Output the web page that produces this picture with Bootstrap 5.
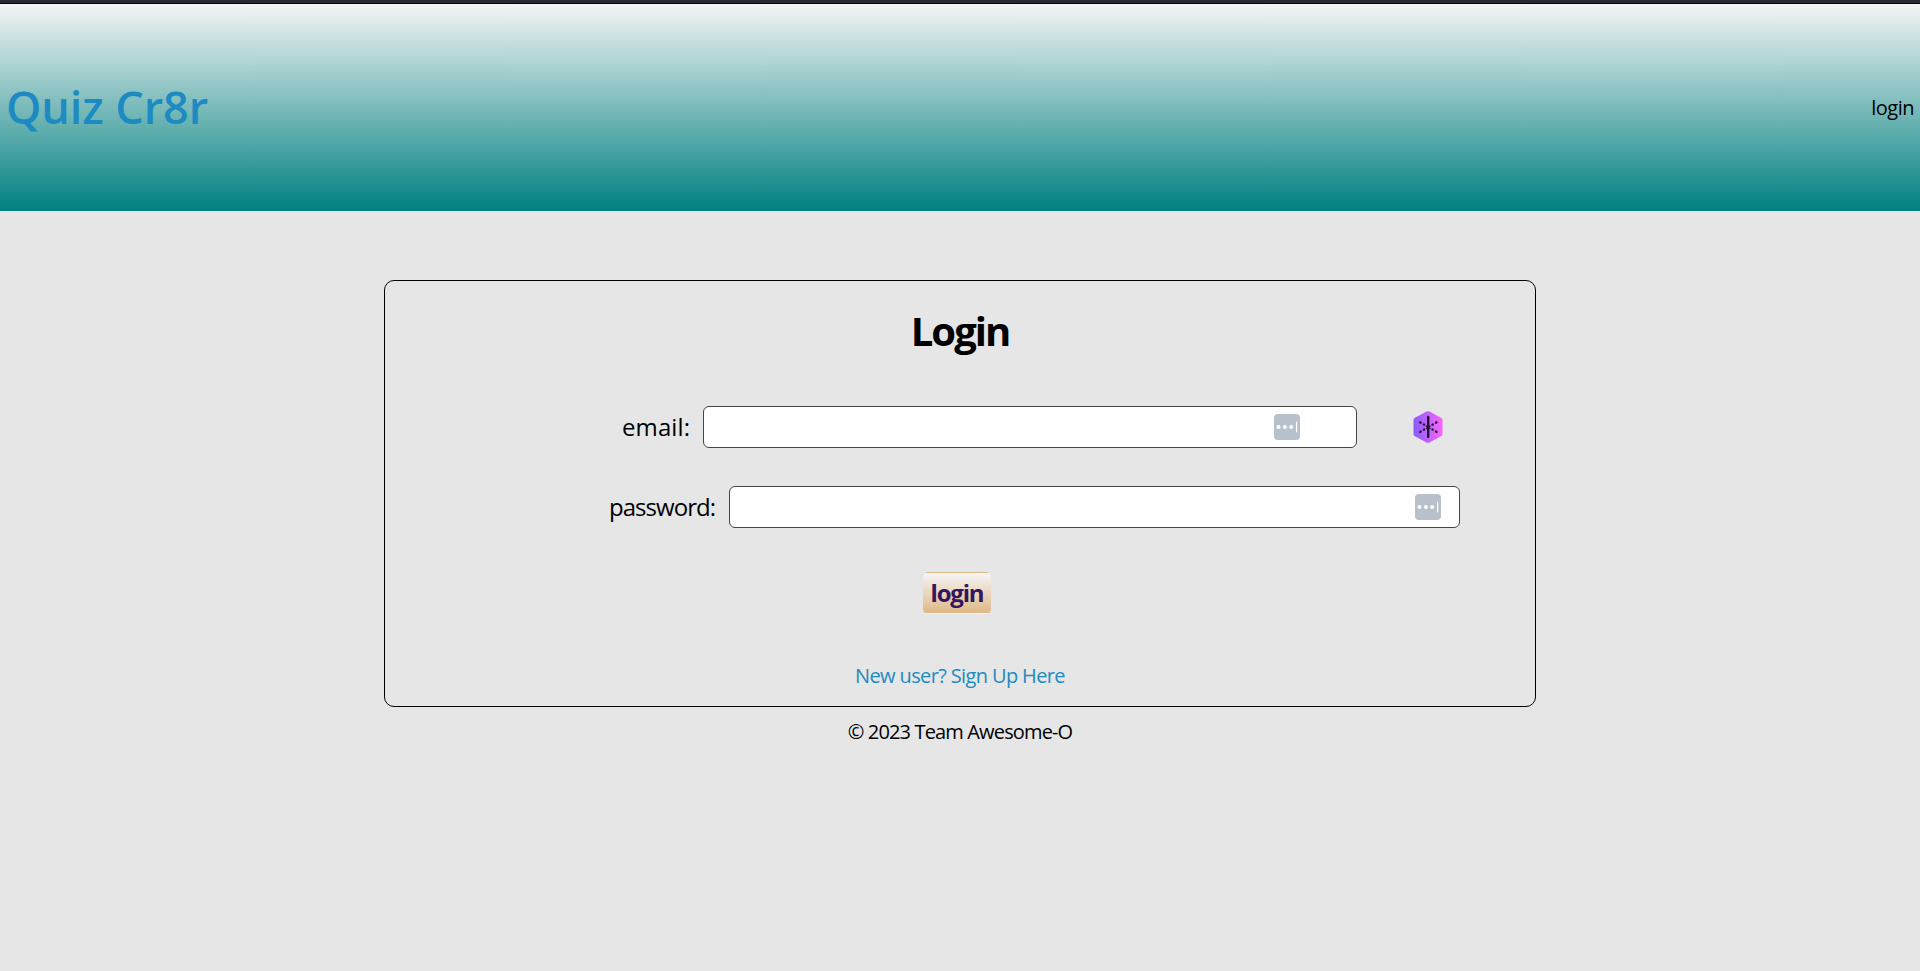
<!DOCTYPE html>
<html lang="en">
<head>
<meta charset="utf-8">
<meta name="viewport" content="width=device-width, initial-scale=1">
<title>Quiz Cr8r</title>
<link href="https://cdn.jsdelivr.net/npm/bootstrap@5.3.0/dist/css/bootstrap.min.css" rel="stylesheet">
<style>
body{background:#e6e6e6;color:#000;font-family:"Trebuchet MS","Open Sans",sans-serif;font-size:20px;line-height:24px;min-height:100vh;font-weight:500}
a{color:#1d8bc1;text-decoration:none}
.site-header{height:211px;border-top:3px solid #2a2833;background:linear-gradient(#f5f5f5,teal);box-shadow:inset 0 1px #080810;padding:0 6px}
.brand{font-size:45px;line-height:54px;font-weight:600;color:#1d8bc1;letter-spacing:-.1px}
.nav-login{color:#000;letter-spacing:-.5px;padding-top:2px}
.login-box{width:60%;height:427px;margin-top:69px;border:1px solid #000;border-radius:10px}
.login-box h1{font-size:40px;line-height:48px;font-weight:700;margin:26px 0 51px;letter-spacing:-2px}
.field-row{height:42px}
.field-row label{font-size:24px;line-height:42px;white-space:nowrap;font-weight:400}
.email-row{padding-left:237px;margin-bottom:38px}
.email-row label{width:81px;letter-spacing:.1px}
.pass-row{padding-left:224px}
.pass-row label{width:120px;letter-spacing:-.95px}
.form-control{height:42px;padding:0 70px 0 8px;border:1px solid #444;border-radius:6px;background:#fff;font-size:24px}
.email-wrap{width:654px}
.pass-wrap{width:731px}
.field-key{right:57px;top:8px}
.pass-wrap .field-key{right:19px}
.hex{margin-left:56px}
.btn-login{width:68px;height:42px;margin:44px 0 0 538px;padding:0;border:0;border-radius:5px;background:linear-gradient(#deb887 0 1px,#f5f5f5 1px,#deb887 41px,#f5f5f5 41px);color:#36145e;font-size:24px;line-height:42px;font-weight:700;letter-spacing:-1.2px}
.signup{margin-top:50px;letter-spacing:-.63px}
footer{margin-top:13px;letter-spacing:-.85px}
</style>
</head>
<body>
<header class="site-header d-flex justify-content-between align-items-center">
  <a class="brand" href="#"><span>Quiz Cr8r</span></a>
  <a class="nav-login" href="#"><span>login</span></a>
</header>
<main class="login-box mx-auto">
  <h1 class="text-center"><span>Login</span></h1>
  <form>
    <div class="field-row email-row d-flex align-items-center">
      <label for="email"><span>email:</span></label>
      <div class="email-wrap position-relative">
        <input class="form-control" type="email" id="email">
        <svg class="field-key position-absolute" width="26" height="26" viewBox="0 0 26 26"><rect width="26" height="26" rx="4" fill="#b8c0cb"/><g fill="#fff"><circle cx="4.500" cy="13" r="2"/><circle cx="10.900" cy="13" r="2"/><circle cx="17.200" cy="13" r="2"/><rect x="22" y="7.700" width="1.200" height="10.600"/></g></svg>
      </div>
      <svg class="hex" width="30" height="32" viewBox="0 0 30 32"><defs><linearGradient id="violet"><stop stop-color="#8a5cff"/><stop offset="1" stop-color="#f967f8"/></linearGradient></defs><path d="M13.500.6Q15-.2 16.500.6L28.500 7Q29.500 7.500 29.500 9V23Q29.500 24.500 28.500 25L16.500 31.500Q15 32.200 13.500 31.500L1.500 25Q.5 24.500.5 23V9Q.5 7.500 1.500 7Z" fill="url(#violet)"/><g stroke="#1d102f" fill="none" stroke-linecap="round"><path d="M15.200 6V26" stroke-width="2.300"/><path d="M7 11.300L11.200 13.700M7 20.900L11.200 18.500M23.600 11.300L19.400 13.700M23.600 20.900L19.400 18.500" stroke-width="2.200" stroke-dasharray=".8 3.600"/><path d="M13.400 15L17 17.200M13.400 17.200L17 15" stroke-width="1.300"/></g></svg>
    </div>
    <div class="field-row pass-row d-flex align-items-center">
      <label for="password"><span>password:</span></label>
      <div class="pass-wrap position-relative">
        <input class="form-control" type="password" id="password">
        <svg class="field-key position-absolute" width="26" height="26" viewBox="0 0 26 26"><rect width="26" height="26" rx="4" fill="#b8c0cb"/><g fill="#fff"><circle cx="4.500" cy="13" r="2"/><circle cx="10.900" cy="13" r="2"/><circle cx="17.200" cy="13" r="2"/><rect x="22" y="7.700" width="1.200" height="10.600"/></g></svg>
      </div>
    </div>
    <button class="btn btn-login d-block" type="button"><span>login</span></button>
  </form>
  <div class="signup text-center"><a href="#"><span>New user? Sign Up Here</span></a></div>
</main>
<footer class="text-center"><span>© 2023 Team Awesome-O</span></footer>
<script src="https://cdn.jsdelivr.net/npm/bootstrap@5.3.0/dist/js/bootstrap.bundle.min.js"></script>
</body>
</html>
